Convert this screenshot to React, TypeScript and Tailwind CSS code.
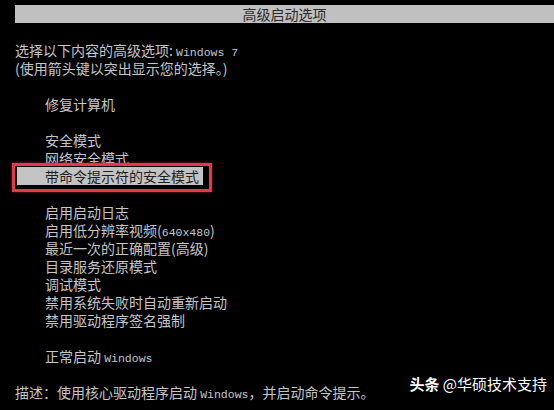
import React from 'react';

const cjk = { fontFamily: '"Noto Sans CJK SC", "Noto Sans", sans-serif' };

// latin parts look like a small monospace console font
function M({ children }: { children: React.ReactNode }) {
    return (
        <span className="text-[11.5px]" style={{ fontFamily: '"Liberation Mono", monospace' }}>
            {children}
        </span>
    );
}

function Row({ children, indent = false }: { children?: React.ReactNode; indent?: boolean }) {
    return (
        <div className={`h-[18px] leading-[18px] whitespace-nowrap ${indent ? 'pl-[45px]' : 'pl-[15px]'}`}>
            {children}
        </div>
    );
}

const options = [
    '启用启动日志',
    null,
    '最近一次的正确配置(高级)',
    '目录服务还原模式',
    '调试模式',
    '禁用系统失败时自动重新启动',
    '禁用驱动程序签名强制',
];

export default function App() {
    return (
        <div
            className="relative w-[554px] h-[410px] bg-black text-[#c6c6c6] text-[14px] pt-[5px] overflow-hidden"
            style={cjk}
        >
            <div className="ml-[15px] h-[18px] bg-[#c0c0c0] text-[#2a2a2a] leading-[18px] text-center text-[14px]">
                高级启动选项
            </div>
            <Row />
            <Row>
                选择以下内容的高级选项: <M>Windows 7</M>
            </Row>
            <Row>(使用箭头键以突出显示您的选择。)</Row>
            <Row />
            <Row indent>修复计算机</Row>
            <Row />
            <Row indent>安全模式</Row>
            <Row indent>网络安全模式</Row>
            <div className="relative h-[18px] leading-[18px]">
                <div className="ml-[17px] w-[186px] h-[18px] bg-[#c3c3c3] text-[#1e1e1e] pl-[28px] whitespace-nowrap">
                    带命令提示符的安全模式
                </div>
                <div className="absolute left-[12px] top-[-4px] w-[200px] h-[29px] border-[3px] border-[#e23a48] shadow-[0_0_3px_rgba(230,60,70,0.6)]" />
            </div>
            <Row />
            {options.map((o, i) =>
                o === null ? (
                    <Row key={i} indent>
                        启用低分辨率视频(<M>640x480</M>)
                    </Row>
                ) : (
                    <Row key={i} indent>
                        {o}
                    </Row>
                )
            )}
            <Row />
            <Row indent>
                正常启动 <M>Windows</M>
            </Row>
            <Row />
            <Row>
                描述：使用核心驱动程序启动 <M>Windows</M>，并启动命令提示。
            </Row>

            <div className="absolute right-[7px] top-[374px] text-white text-[15px] leading-[20px] whitespace-nowrap">
                <span className="font-bold">头条</span> @华硕技术支持
            </div>
        </div>
    );
}
